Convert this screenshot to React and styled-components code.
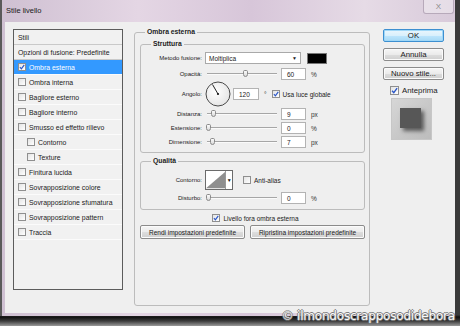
import React from "react";
import styled, { createGlobalStyle } from "styled-components";

const GlobalStyle = createGlobalStyle`
  html, body { margin: 0; padding: 0; }
  body {
    width: 460px;
    height: 326px;
    overflow: hidden;
    font-family: "Liberation Sans", Arial, sans-serif;
    background: linear-gradient(180deg, #3a3a3a 0, #3a3a3a 315px, #101010 317px, #3c3c3c 321px, #9a9a9a 326px);
  }
`;

const Page = styled.div`
  position: relative;
  width: 460px;
  height: 326px;
`;

const Window = styled.div`
  width: 453px;
  height: 316px;
  border-left: 2px solid #5a5a5a;
  display: flex;
  flex-direction: column;
  background: linear-gradient(90deg, #cfc0d2 0%, #e4d6e4 30%, #d7c6d9 55%, #e6dbe6 80%, #d8cada 100%);
`;

const TitleBar = styled.div`
  height: 22px;
  display: flex;
  justify-content: space-between;
  align-items: flex-start;
  padding-left: 4px;
  padding-right: 1px;
`;

const Title = styled.span`
  font-size: 7.5px;
  color: #1a1a1a;
  margin-top: 6px;
`;

const CloseButton = styled.div`
  width: 29px;
  height: 13px;
  border: 1px solid #b7a9ba;
  border-top: none;
  border-radius: 0 0 3px 3px;
  background: rgba(255, 255, 255, 0.35);
  display: flex;
  align-items: center;
  justify-content: center;
  font-size: 8px;
  color: #8a8a8a;
`;

const Content = styled.div`
  flex: 1;
  margin: 0 0 3px 3px;
  background: #efefef;
  display: flex;
  padding: 6px 8px 7px 8px;
`;

const List = styled.div`
  width: 108px;
  height: 259px;
  margin-top: 1px;
  border: 1px solid #5c5c5c;
  background: #f1f1f1;
  display: flex;
  flex-direction: column;
`;

const ListRow = styled.div`
  height: 14px;
  flex-shrink: 0;
  display: flex;
  align-items: center;
  gap: 3px;
  padding-left: ${(p) => (p.$indent ? 13 : 4)}px;
  border-bottom: 1px solid ${(p) => (p.$header ? "#c9c9c9" : "#fbfbfb")};
  background: ${(p) => (p.$selected ? "#3399ff" : "transparent")};
  color: ${(p) => (p.$selected ? "#ffffff" : "#222")};
  font-size: 6.9px;
  white-space: nowrap;
`;

const Box = styled.span`
  width: ${(p) => p.$size || 8}px;
  height: ${(p) => p.$size || 8}px;
  flex-shrink: 0;
  box-sizing: border-box;
  border: 1px solid #8f8f8f;
  background: linear-gradient(135deg, #e4e4e4, #ffffff);
  display: inline-flex;
  align-items: center;
  justify-content: center;
`;

const Check = ({ checked, size }) => (
  <Box $size={size}>
    {checked && (
      <svg width={size ? size - 2 : 6} height={size ? size - 2 : 6} viewBox="0 0 8 8">
        <path d="M1.2 4.2 L3.2 6.4 L7 1.2" fill="none" stroke="#2b57c8" strokeWidth="1.6" />
      </svg>
    )}
  </Box>
);

const Fieldset = styled.fieldset`
  box-sizing: border-box;
  margin: ${(p) => p.$mt || 0}px 0 0 0;
  border: 1px solid #bcbcbc;
  border-radius: 3px;
  padding: ${(p) => p.$pad};
  height: ${(p) => (p.$h ? `${p.$h}px` : "auto")};
  min-width: 0;
`;

const Legend = styled.legend`
  margin-left: 5px;
  padding: 0 2px;
  font-size: 6.8px;
  font-weight: bold;
  color: #1c1c1c;
  line-height: 8px;
`;

const Middle = styled(Fieldset)`
  width: 236px;
  margin-left: 11px;
`;

const Stack = styled.div`
  display: flex;
  flex-direction: column;
  gap: 2px;
`;

const Row = styled.div`
  height: ${(p) => p.$h || 12}px;
  display: flex;
  align-items: center;
  margin-bottom: ${(p) => p.$mb || 0}px;
`;

const Label = styled.span`
  width: 56px;
  margin-right: 3px;
  text-align: right;
  font-size: 6px;
  color: #222;
  white-space: nowrap;
`;

const Select = styled.div`
  width: 96px;
  height: 12px;
  box-sizing: border-box;
  border: 1px solid #a9a9a9;
  background: #fff;
  display: flex;
  align-items: center;
  justify-content: space-between;
  padding: 0 3px 0 3px;
  font-size: 6.5px;
  color: #222;
`;

const Swatch = styled.div`
  width: 20px;
  height: 11px;
  margin-left: 6px;
  background: #000;
  border: 1px solid #777;
  box-sizing: border-box;
`;

const SliderWrap = styled.div`
  position: relative;
  width: 74px;
  height: 10px;
  display: flex;
  align-items: center;
`;

const Track = styled.div`
  margin: 0 2px;
  flex: 1;
  height: 1px;
  background: #a6a6a6;
  border-bottom: 1px solid #fafafa;
`;

const Thumb = styled.div`
  position: absolute;
  top: 1px;
  left: ${(p) => p.$pos}px;
  width: 5px;
  height: 7px;
  box-sizing: border-box;
  border: 1px solid #8a8a8a;
  border-radius: 2px 2px 3px 3px;
  background: linear-gradient(180deg, #fdfdfd, #d8d8d8);
`;

const Slider = ({ pos }) => (
  <SliderWrap>
    <Track />
    <Thumb $pos={pos} />
  </SliderWrap>
);

const Field = styled.div`
  width: ${(p) => p.$w || 25}px;
  height: 12px;
  margin-left: 2px;
  box-sizing: border-box;
  border: 1px solid #b3b3b3;
  background: #fff;
  display: flex;
  align-items: center;
  padding-left: 5px;
  font-size: 6.5px;
  color: #222;
`;

const Unit = styled.span`
  margin-left: ${(p) => p.$ml || 5}px;
  font-size: 6.5px;
  color: #333;
`;

const Text = styled.span`
  margin-left: 3px;
  font-size: ${(p) => p.$fs || 6.5}px;
  color: #222;
  white-space: nowrap;
`;

const Centered = styled.div`
  height: 10px;
  margin-top: 3px;
  display: flex;
  justify-content: center;
  align-items: center;
  padding-left: 6px;
`;

const ButtonRow = styled.div`
  display: flex;
  gap: 5px;
  margin-top: 2px;
`;

const Button = styled.div`
  width: ${(p) => p.$w}px;
  height: ${(p) => p.$h || 14}px;
  box-sizing: border-box;
  border: 1px solid ${(p) => (p.$primary ? "#3c8fd0" : "#8b8b8b")};
  border-radius: 2px;
  background: ${(p) =>
    p.$primary
      ? "linear-gradient(180deg, #eaf6fd 0%, #d9f0fc 50%, #bee6fd 51%, #a7d9f5 100%)"
      : "linear-gradient(180deg, #f6f6f6 0%, #ebebeb 50%, #dddddd 51%, #cfcfcf 100%)"};
  box-shadow: ${(p) => (p.$primary ? "inset 0 0 0 1px #9fd7f7" : "inset 0 0 0 1px #fbfbfb")};
  display: flex;
  align-items: center;
  justify-content: center;
  font-size: ${(p) => p.$fs || 6.5}px;
  color: #1a1a1a;
  white-space: nowrap;
`;

const RightCol = styled.div`
  width: 61px;
  margin-left: 13px;
  margin-top: 1px;
  display: flex;
  flex-direction: column;
  gap: 6px;
`;

const PreviewRow = styled.div`
  display: flex;
  align-items: center;
  padding-left: 7px;
  height: 9px;
`;

const Preview = styled.div`
  width: 41px;
  height: 42px;
  margin-left: 8px;
  margin-top: -3px;
  box-sizing: border-box;
  border: 1px solid #c7c7c7;
  background: linear-gradient(135deg, #d6d6d6, #bcbcbc);
  display: flex;
  align-items: center;
  justify-content: center;
`;

const PreviewSquare = styled.div`
  width: 21px;
  height: 20px;
  margin: -2px 0 0 -2px;
  background: #575757;
  box-shadow: 3px 3px 4px rgba(0, 0, 0, 0.55);
`;

const ContourBox = styled.div`
  width: 28px;
  height: 20px;
  box-sizing: border-box;
  border: 1px solid #6b6b6b;
  background: #fff;
  display: flex;
`;

const ContourArrow = styled.div`
  width: 6px;
  border-left: 1px solid #9a9a9a;
  display: flex;
  align-items: center;
  justify-content: center;
  font-size: 5px;
  color: #111;
`;

const Watermark = styled.div`
  position: absolute;
  right: 5px;
  bottom: 3px;
  font-family: "DejaVu Sans", sans-serif;
  font-size: 12px;
  letter-spacing: -0.2px;
  color: #fafafa;
  text-shadow: -1px 0 #7d7d7d, 1px 0 #7d7d7d, 0 -1px #7d7d7d, 0 1px #7d7d7d;
`;

const styles = [
  { label: "Ombra esterna", checked: true, selected: true },
  { label: "Ombra interna" },
  { label: "Bagliore esterno" },
  { label: "Bagliore interno" },
  { label: "Smusso ed effetto rilievo" },
  { label: "Contorno", indent: true },
  { label: "Texture", indent: true },
  { label: "Finitura lucida" },
  { label: "Sovrapposizione colore" },
  { label: "Sovrapposizione sfumatura" },
  { label: "Sovrapposizione pattern" },
  { label: "Traccia" },
];

const Dial = () => (
  <svg width="26" height="26" viewBox="0 0 26 26">
    <defs>
      <radialGradient id="dialg" cx="0.4" cy="0.4" r="0.7">
        <stop offset="0" stopColor="#ffffff" />
        <stop offset="1" stopColor="#e2e2e2" />
      </radialGradient>
    </defs>
    <circle cx="13" cy="13" r="12" fill="url(#dialg)" stroke="#4a4a4a" strokeWidth="1" />
    <line x1="13" y1="13" x2="7.5" y2="3.5" stroke="#222" strokeWidth="1" />
    <circle cx="13" cy="13" r="1.1" fill="#111" />
  </svg>
);

const SliderRow = ({ label, pos, value, unit }) => (
  <Row>
    <Label>{label}</Label>
    <Slider pos={pos} />
    <Field>{value}</Field>
    <Unit>{unit}</Unit>
  </Row>
);

export default function App() {
  return (
    <Page>
      <GlobalStyle />
      <Window>
        <TitleBar>
          <Title>Stile livello</Title>
          <CloseButton>X</CloseButton>
        </TitleBar>
        <Content>
          <List>
            <ListRow $header>Stili</ListRow>
            <ListRow $header>Opzioni di fusione: Predefinite</ListRow>
            {styles.map((s) => (
              <ListRow key={s.label} $selected={s.selected} $indent={s.indent}>
                <Check checked={s.checked} />
                {s.label}
              </ListRow>
            ))}
          </List>

          <Middle $h={278} $pad="4px 4px 0 5px">
            <Legend>Ombra esterna</Legend>
            <Fieldset $pad="4px 4px 4px 5px">
              <Legend>Struttura</Legend>
              <Stack>
                <Row $mb={2}>
                  <Label>Metodo fusione:</Label>
                  <Select>
                    <span>Moltiplica</span>
                    <span style={{ fontSize: "5px" }}>▼</span>
                  </Select>
                  <Swatch />
                </Row>
                <SliderRow label="Opacità:" pos={38} value="60" unit="%" />
                <Row $h={24}>
                  <Label>Angolo:</Label>
                  <Dial />
                  <Field $w={26}>120</Field>
                  <Unit $ml={5}>°</Unit>
                  <span style={{ marginLeft: 5, display: "flex" }}>
                    <Check checked />
                  </span>
                  <Text>Usa luce globale</Text>
                </Row>
                <SliderRow label="Distanza:" pos={6} value="9" unit="px" />
                <SliderRow label="Estensione:" pos={1} value="0" unit="%" />
                <SliderRow label="Dimensione:" pos={5} value="7" unit="px" />
              </Stack>
            </Fieldset>

            <Fieldset $mt={4} $pad="5px 4px 5px 5px">
              <Legend>Qualità</Legend>
              <Stack>
                <Row $h={20}>
                  <Label>Contorno:</Label>
                  <ContourBox>
                    <svg width="21" height="18" viewBox="0 0 21 18">
                      <polygon points="0,18 21,0 21,18" fill="#8f8f8f" />
                    </svg>
                    <ContourArrow>▼</ContourArrow>
                  </ContourBox>
                  <span style={{ marginLeft: 10, display: "flex" }}>
                    <Check />
                  </span>
                  <Text>Anti-alias</Text>
                </Row>
                <SliderRow label="Disturbo:" pos={1} value="0" unit="%" />
              </Stack>
            </Fieldset>

            <Centered>
              <Check checked />
              <Text>Livello fora ombra esterna</Text>
            </Centered>

            <ButtonRow>
              <Button $w={105}>Rendi impostazioni predefinite</Button>
              <Button $w={115}>Ripristina impostazioni predefinite</Button>
            </ButtonRow>
          </Middle>

          <RightCol>
            <Button $w={61} $h={13} $primary $fs={7.8}>OK</Button>
            <Button $w={61} $h={13} $fs={7.8}>Annulla</Button>
            <Button $w={61} $h={13} $fs={7.8}>Nuovo stile...</Button>
            <PreviewRow>
              <Check checked size={9} />
              <Text $fs={7.8}>Anteprima</Text>
            </PreviewRow>
            <Preview>
              <PreviewSquare />
            </Preview>
          </RightCol>
        </Content>
      </Window>
      <Watermark>© ilmondoscrapposodidebora</Watermark>
    </Page>
  );
}
